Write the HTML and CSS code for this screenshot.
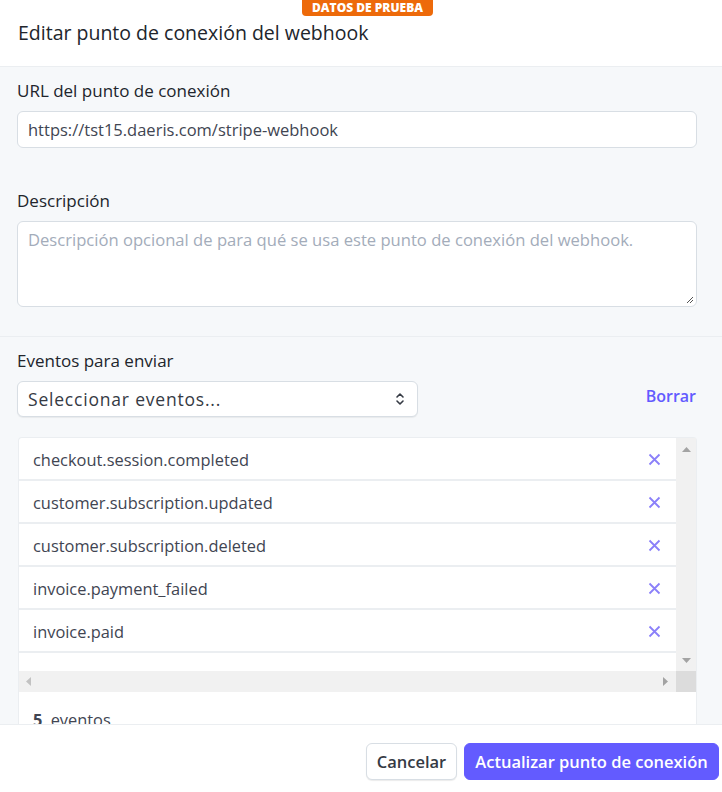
FILE: index.html
```html
<!DOCTYPE html>
<html lang="es">
<head>
<meta charset="utf-8">
<link rel="stylesheet" href="styles.css">
</head>
<body>
<div class="page">
  <header class="header">
    <span class="badge">DATOS DE PRUEBA</span>
    <h1 class="title">Editar punto de conexión del webhook</h1>
  </header>
  <main class="main">
    <section class="section first">
      <label class="label">URL del punto de conexión</label>
      <div class="input">https://tst15.daeris.com/stripe-webhook</div>
      <label class="label desc-label">Descripción</label>
      <div class="textarea">
        <span class="placeholder">Descripción opcional de para qué se usa este punto de conexión del webhook.</span>
        <svg class="grip" width="8" height="8" viewBox="0 0 8 8"><path d="M7 1 L1 7 M7 4 L4 7" stroke="#555" stroke-width="1"/></svg>
      </div>
    </section>
    <section class="section second">
      <label class="label">Eventos para enviar</label>
      <div class="select-row">
        <div class="select">
          <span>Seleccionar eventos...</span>
          <svg class="chev" width="10" height="14" viewBox="0 0 10 14"><path d="M2 5 L5 2 L8 5 M2 9 L5 12 L8 9" fill="none" stroke="#353a44" stroke-width="1.6" stroke-linecap="round" stroke-linejoin="round"/></svg>
        </div>
        <a class="clear">Borrar</a>
      </div>
      <div class="list">
        <div class="scroll">
          <div class="rows">
            <div class="row"><span>checkout.session.completed</span><svg class="x" width="13" height="13" viewBox="0 0 13 13"><path d="M1.5 1.5 L11.5 11.5 M11.5 1.5 L1.5 11.5" stroke="#8b80f9" stroke-width="1.8"/></svg></div>
            <div class="row"><span>customer.subscription.updated</span><svg class="x" width="13" height="13" viewBox="0 0 13 13"><path d="M1.5 1.5 L11.5 11.5 M11.5 1.5 L1.5 11.5" stroke="#8b80f9" stroke-width="1.8"/></svg></div>
            <div class="row"><span>customer.subscription.deleted</span><svg class="x" width="13" height="13" viewBox="0 0 13 13"><path d="M1.5 1.5 L11.5 11.5 M11.5 1.5 L1.5 11.5" stroke="#8b80f9" stroke-width="1.8"/></svg></div>
            <div class="row"><span>invoice.payment_failed</span><svg class="x" width="13" height="13" viewBox="0 0 13 13"><path d="M1.5 1.5 L11.5 11.5 M11.5 1.5 L1.5 11.5" stroke="#8b80f9" stroke-width="1.8"/></svg></div>
            <div class="row"><span>invoice.paid</span><svg class="x" width="13" height="13" viewBox="0 0 13 13"><path d="M1.5 1.5 L11.5 11.5 M11.5 1.5 L1.5 11.5" stroke="#8b80f9" stroke-width="1.8"/></svg></div>
          </div>
          <div class="vbar">
            <svg width="9" height="5" viewBox="0 0 9 5"><path d="M0 5 L4.5 0 L9 5 Z" fill="#a3a3a3"/></svg>
            <svg width="9" height="5" viewBox="0 0 9 5"><path d="M0 0 L4.5 5 L9 0 Z" fill="#a3a3a3"/></svg>
          </div>
          <div class="hbar">
            <svg width="5" height="9" viewBox="0 0 5 9"><path d="M5 0 L0 4.5 L5 9 Z" fill="#c2c2c2"/></svg>
            <svg width="5" height="9" viewBox="0 0 5 9"><path d="M0 0 L5 4.5 L0 9 Z" fill="#a3a3a3"/></svg>
          </div>
          <div class="corner"></div>
        </div>
        <div class="count"><b>5</b> eventos</div>
      </div>
    </section>
  </main>
  <footer class="footer">
    <button class="btn secondary">Cancelar</button>
    <button class="btn primary">Actualizar punto de conexión</button>
  </footer>
</div>
</body>
</html>
```
FILE: styles.css
```css
* { box-sizing: border-box; }
html, body { margin: 0; padding: 0; }
body {
  font-family: "Open Sans", "Noto Sans", sans-serif;
  color: #353a44;
  background: #fff;
}
.page {
  width: 722px;
  height: 792px;
  display: flex;
  flex-direction: column;
  overflow: hidden;
}
.header {
  position: relative;
  height: 67px;
  flex: none;
  border-bottom: 1px solid #ebeef1;
  background: #fff;
  padding: 21px 18px 0;
}
.badge {
  position: absolute;
  top: 0;
  left: 302px;
  width: 131px;
  height: 16px;
  background: #ed6a0a;
  color: #fff;
  font-size: 12px;
  font-weight: 800;
  line-height: 16px;
  text-align: center;
  border-radius: 0 0 4px 4px;
}
.title {
  margin: 0;
  font-size: 19.5px;
  font-weight: 500;
  line-height: 24px;
  color: #21252c;
}
.main {
  flex: 1;
  background: #f6f8fa;
  overflow: hidden;
}
.section {
  display: flex;
  flex-direction: column;
  padding: 14px 25px 0 17px;
}
.section.first {
  padding-bottom: 29px;
  border-bottom: 1px solid #ebeef1;
}
.label {
  font-size: 17px;
  font-weight: 500;
  line-height: 20px;
  color: #21252c;
  margin-bottom: 10px;
}
.desc-label { margin-top: 43px; }
.input {
  height: 37px;
  background: #fff;
  border: 1px solid #d8dee4;
  border-radius: 6px;
  padding: 0 10px;
  font-size: 16.5px;
  line-height: 35px;
  color: #414552;
}
.textarea {
  position: relative;
  height: 86px;
  background: #fff;
  border: 1px solid #d8dee4;
  border-radius: 6px;
  padding: 7px 10px;
  font-size: 16.6px;
  line-height: 22px;
}
.placeholder { color: #a3acba; }
.grip { position: absolute; right: 2px; bottom: 2px; }
.select-row {
  display: flex;
  align-items: center;
  justify-content: space-between;
  height: 36px;
}
.select {
  width: 401px;
  height: 36px;
  background: #fff;
  border: 1px solid #d8dee4;
  border-radius: 6px;
  box-shadow: 0 1px 1px rgba(0,0,0,0.06);
  display: flex;
  align-items: center;
  justify-content: space-between;
  padding: 0 12px 0 10px;
  font-size: 17.5px;
  font-weight: 500;
  letter-spacing: 0.8px;
  color: #353a44;
}
.clear {
  color: #635bff;
  font-size: 16px;
  font-weight: 600;
  margin-right: 1px;
  margin-top: -6px;
}
.list {
  margin-top: 20px;
  margin-left: 1px;
  background: #fff;
  border: 1px solid #ebeef1;
  border-bottom: none;
  border-radius: 4px 4px 0 0;
}
.scroll {
  display: grid;
  grid-template-columns: 1fr 20px;
  grid-template-rows: 233px 21px;
}
.rows { overflow: hidden; }
.row {
  height: 43px;
  border-bottom: 2px solid #ebeef1;
  display: flex;
  align-items: center;
  justify-content: space-between;
  padding: 1px 15px 0 14px;
  font-size: 16.4px;
  color: #414552;
}
.vbar {
  background: #f1f1f1;
  display: flex;
  flex-direction: column;
  justify-content: space-between;
  align-items: center;
  padding: 9px 0 8px;
}
.hbar {
  background: #f1f1f1;
  display: flex;
  justify-content: space-between;
  align-items: center;
  padding: 0 8px 0 7px;
}
.corner { background: #dcdcdc; }
.count {
  padding: 16px 14px 0;
  height: 60px;
  font-size: 16.4px;
  color: #414552;
}
.count b { font-weight: 700; margin-right: 4px; }
.footer {
  flex: none;
  height: 68px;
  background: #fff;
  border-top: 1px solid #ebeef1;
  display: flex;
  justify-content: flex-end;
  align-items: center;
  gap: 7px;
  padding: 5px 3px 0 0;
}
.btn {
  height: 37px;
  border-radius: 6px;
  font-family: inherit;
  font-size: 16.5px;
  font-weight: 600;
  padding: 0 8px;
  cursor: pointer;
}
.secondary {
  width: 91px;
  background: #fff;
  border: 1px solid #d8dee4;
  color: #353a44;
  box-shadow: 0 1px 1px rgba(0,0,0,0.08);
}
.primary {
  width: 255px;
  background: #635bff;
  border: 1px solid #635bff;
  color: #fff;
}
```
